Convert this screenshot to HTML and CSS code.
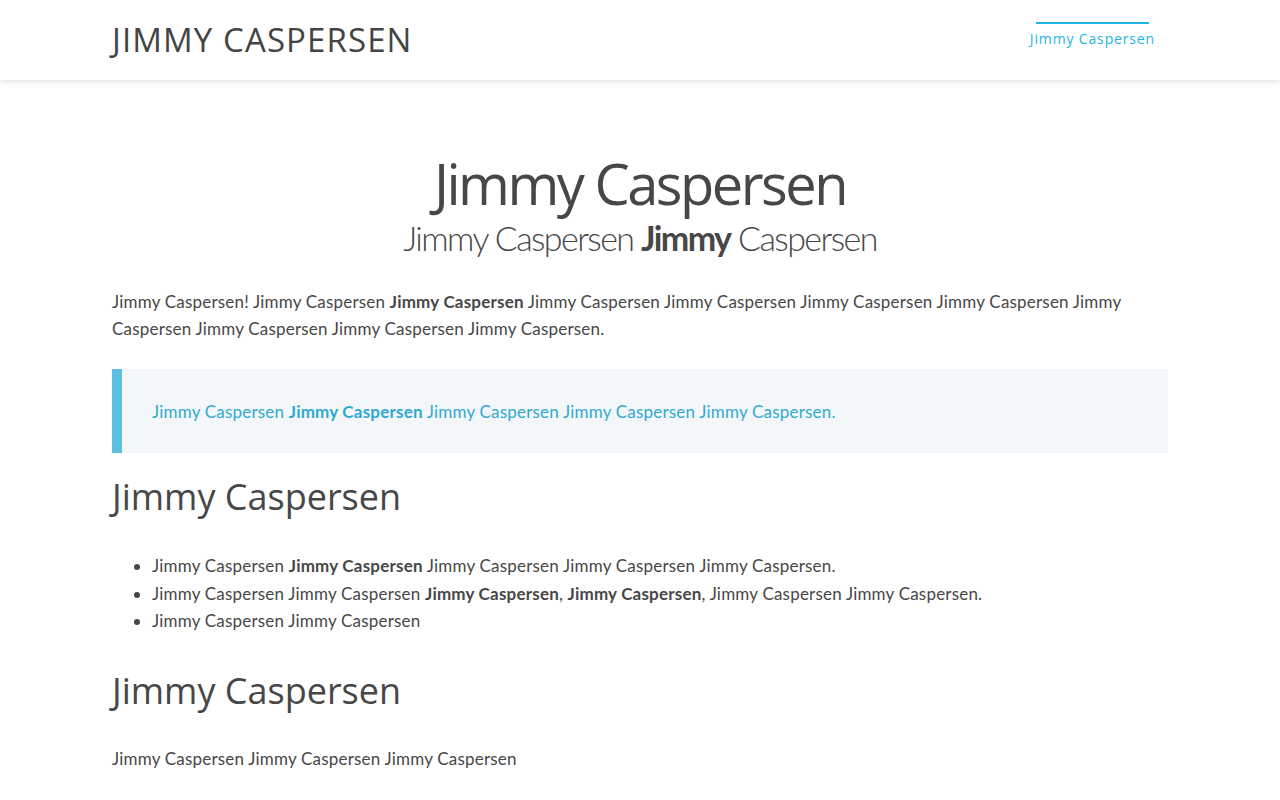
FILE: index.html
```html
<!DOCTYPE html>
<html lang="en">
<head>
    <meta charset="UTF-8">
    <meta name="viewport" content="width=device-width, initial-scale=1.0">
    <title>Jimmy Caspersen</title>
    <link rel="stylesheet" href="styles.css">
</head>
<body>
    <header class="site-header">
        <div class="container header-inner">
            <a class="brand" href="#">JIMMY CASPERSEN</a>
            <nav class="nav">
                <a class="nav-link active" href="#">Jimmy Caspersen</a>
            </nav>
        </div>
    </header>

    <main class="container content">
        <div class="page-title">
            <h1>Jimmy Caspersen</h1>
            <p class="subtitle">Jimmy Caspersen <strong>Jimmy</strong> Caspersen</p>
        </div>

        <p>Jimmy Caspersen! Jimmy Caspersen <strong>Jimmy Caspersen</strong> Jimmy Caspersen Jimmy Caspersen Jimmy Caspersen Jimmy Caspersen Jimmy Caspersen Jimmy Caspersen Jimmy Caspersen Jimmy Caspersen.</p>

        <blockquote class="note">
            Jimmy Caspersen <strong>Jimmy Caspersen</strong> Jimmy Caspersen Jimmy Caspersen Jimmy Caspersen.
        </blockquote>

        <h2>Jimmy Caspersen</h2>
        <ul>
            <li>Jimmy Caspersen <strong>Jimmy Caspersen</strong> Jimmy Caspersen Jimmy Caspersen Jimmy Caspersen.</li>
            <li>Jimmy Caspersen Jimmy Caspersen <strong>Jimmy Caspersen</strong>, <strong>Jimmy Caspersen</strong>, Jimmy Caspersen Jimmy Caspersen.</li>
            <li>Jimmy Caspersen Jimmy Caspersen</li>
        </ul>

        <h2 class="last-heading">Jimmy Caspersen</h2>
        <p>Jimmy Caspersen Jimmy Caspersen Jimmy Caspersen</p>
    </main>
</body>
</html>
```

FILE: styles.css
```css
body {
    font-family: Lato, "Open Sans", sans-serif;
    font-size: 17px;
    letter-spacing: 0.2px;
    line-height: 27px;
    color: #474747;
    background-color: #fff;
    margin: 0;
    padding: 0;
}

.container {
    max-width: 1056px;
    margin: 0 auto;
}

.site-header {
    height: 80px;
    background: #fff;
    box-shadow: 0 2px 6px rgba(0, 0, 0, 0.12);
}

.header-inner {
    display: flex;
    align-items: center;
    justify-content: space-between;
    height: 100%;
}

.brand {
    font-family: "Open Sans", sans-serif;
    font-size: 33px;
    line-height: 40px;
    color: #444;
    text-decoration: none;
    letter-spacing: 1.1px;
}

.nav-link {
    position: relative;
    display: block;
    padding: 29px 13px 31px;
    font-family: "Open Sans", sans-serif;
    font-size: 14px;
    line-height: 20px;
    letter-spacing: 0.85px;
    color: #1fb5e8;
    text-decoration: none;
}

.nav-link.active::before {
    content: "";
    position: absolute;
    top: 22px;
    left: 19px;
    right: 19px;
    height: 2px;
    background: #1fb5e8;
}

.content {
    padding-top: 70px;
}

.page-title {
    text-align: center;
    margin-bottom: 30px;
}

h1 {
    font-family: "Open Sans", sans-serif;
    font-weight: normal;
    font-size: 56px;
    letter-spacing: -2.5px;
    line-height: 67px;
    margin: 0;
}

.subtitle {
    font-family: Lato, sans-serif;
    font-weight: 300;
    font-size: 34px;
    letter-spacing: -1.6px;
    line-height: 41px;
    margin: 0;
}

.subtitle strong {
    font-weight: bold;
}

p {
    margin: 0 0 28px;
}

strong {
    font-weight: bold;
}

.content > p:first-of-type {
    margin-bottom: 27px;
}

.note {
    margin: 0 0 22px;
    padding: 29px 30px 28px;
    border-left: 10px solid #5bc0de;
    background: #f3f7fa;
    color: #31a9cf;
}

h2 {
    font-family: "Open Sans", sans-serif;
    font-weight: normal;
    font-size: 36px;
    letter-spacing: 0;
    line-height: 43px;
    margin: 0 0 34px;
}

ul {
    margin: 0 0 34px;
    padding-left: 40px;
    line-height: 27.5px;
}

.last-heading {
    margin-bottom: 33px;
}
```
